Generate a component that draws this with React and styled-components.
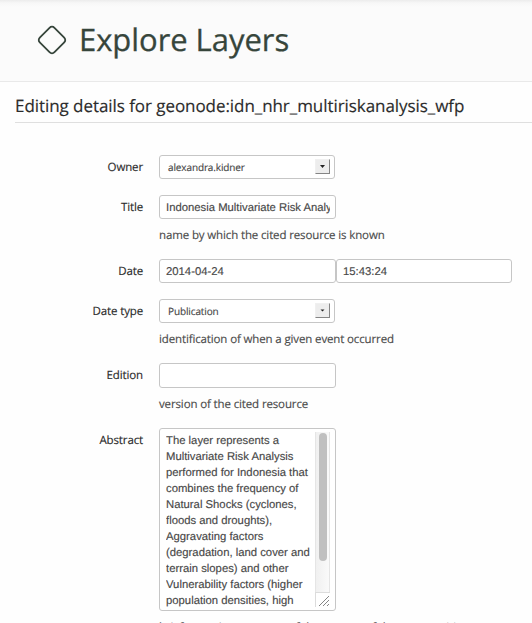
import React from "react";
import styled, { createGlobalStyle } from "styled-components";

const GlobalStyle = createGlobalStyle`
  * { box-sizing: border-box; }
  html, body { margin: 0; background: #fefefe; overflow: hidden; }
`;

const Page = styled.main`
  width: 532px;
  height: 623px;
  overflow: hidden;
  background: #fefefe;
  color: #2b2b2b;
  font-family: "Open Sans", "Noto Sans", sans-serif;
  text-rendering: geometricPrecision;
  -webkit-text-stroke: 0.15px;
`;

const Header = styled.header`
  display: flex;
  align-items: center;
  gap: 11px;
  height: 82px;
  padding: 0 0 2px 36px;
  border-bottom: 1px solid #e9e9e9;
  background: linear-gradient(#ececec 0, #f7f7f7 3px, #fbfbfb 7px, #fbfbfb 100%);
  color: #36453b;
`;

const PageTitle = styled.h1`
  margin: 0;
  font-size: 31px;
  line-height: 40px;
  font-weight: 400;
  letter-spacing: -0.05px;
  white-space: nowrap;
  -webkit-text-stroke: 0.3px;
`;

const SectionTitle = styled.h2`
  height: 41px;
  margin: 0 0 32px 15px;
  padding-top: 11px;
  border-bottom: 1px solid #dfdfdf;
  font-size: 17px;
  line-height: 25px;
  font-weight: 400;
  letter-spacing: -0.06px;
  white-space: nowrap;
`;

const Form = styled.form`
  display: flex;
  flex-direction: column;
`;

const Row = styled.div`
  display: grid;
  grid-template-columns: 143px 1fr;
  column-gap: 16px;
  height: ${(p) => p.$height}px;
  flex: none;
`;

const Label = styled.label`
  height: 26px;
  text-align: right;
  font-size: 11.5px;
  line-height: 26px;
  letter-spacing: -0.13px;
  white-space: nowrap;
`;

const Controls = styled.div`
  display: flex;
`;

const Input = styled.input`
  display: block;
  width: ${(p) => p.$width || 177}px;
  height: ${(p) => p.$height || 24}px;
  margin: 0;
  padding: 2px 5px 0 6px;
  border: 1px solid #c6c6c6;
  border-radius: 3px;
  outline: 0;
  background: #fff;
  color: #484848;
  font: 11.3px/20px "Liberation Sans", Arial, sans-serif;
  text-rendering: geometricPrecision;
`;

const Select = styled.div`
  display: flex;
  align-items: center;
  justify-content: space-between;
  width: 176px;
  height: 24px;
  padding: 0 4px 0 8px;
  border: 1px solid #c6c6c6;
  border-radius: 3px;
  background: #fff;
  color: #454545;
  font-size: 10px;
  letter-spacing: -0.12px;
`;

const SelectButton = styled.span`
  display: flex;
  align-items: center;
  justify-content: center;
  width: 15px;
  height: 15px;
  margin-bottom: 1px;
  border: 1px solid;
  border-color: #f0f0f0 #858585 #858585 #f0f0f0;
  background: #ededed;
`;

const Help = styled.p`
  margin: 7px 0 0;
  color: #4b4b4b;
  font-size: 11.5px;
  line-height: 20px;
  letter-spacing: -0.13px;
  white-space: nowrap;
`;

const TextArea = styled.div`
  display: flex;
  justify-content: space-between;
  width: 177px;
  height: 183px;
  padding: 3px 5px 3px 6px;
  border: 1px solid #c6c6c6;
  border-radius: 3px;
  background: #fff;
  color: #484848;
`;

const TextLines = styled.div`
  height: 178px;
  padding-top: 1px;
  overflow: hidden;
  font: 11.3px/16px "Liberation Sans", Arial, sans-serif;
  white-space: pre;
`;

const ScrollColumn = styled.div`
  display: flex;
  flex-direction: column;
  flex: none;
  width: 15px;
  height: 175px;
`;

const ScrollTrack = styled.div`
  height: 161px;
  padding: 1px 3px;
  border: solid #e5e5e5;
  border-width: 0 1px;
  background: linear-gradient(90deg, #f0f0f0, #fafafa);
`;

const ScrollThumb = styled.div`
  width: 8px;
  height: 128px;
  border-radius: 4px;
  background: #c0c0c0;
`;

const Grip = styled.div`
  height: 15px;
  flex: none;
  border: solid #dcdcdc;
  border-width: 1px 0 0 1px;
  svg { display: block; }
`;

const DiamondIcon = () => (
  <svg width="32" height="32" viewBox="0 0 32 32" fill="none" stroke="currentColor" strokeWidth="1.8">
    <rect x="5.6" y="5.6" width="20.8" height="20.8" rx="3.5" transform="rotate(45 16 16)" />
  </svg>
);

const Dropdown = ({ value, arrow }) => (
  <Select>
    <span>{value}</span>
    <SelectButton>
      <svg width="5" height="3" viewBox="0 0 5 3">
        <path d={arrow === "small" ? "M.5 .5h4L2.5 2.5z" : "M0 0h5L2.5 3z"} fill="#222" />
      </svg>
    </SelectButton>
  </Select>
);

const Field = ({ label, height, help, children }) => (
  <Row $height={height}>
    <Label>{label}</Label>
    <div>
      <Controls>{children}</Controls>
      {help && <Help>{help}</Help>}
    </div>
  </Row>
);

const abstractText = `The layer represents a
Multivariate Risk Analysis
performed for Indonesia that
combines the frequency of
Natural Shocks (cyclones,
floods and droughts),
Aggravating factors
(degradation, land cover and
terrain slopes) and other
Vulnerability factors (higher
population densities, high`;

export default function App() {
  return (
    <Page>
      <GlobalStyle />
      <Header>
        <DiamondIcon />
        <PageTitle>Explore Layers</PageTitle>
      </Header>
      <SectionTitle>Editing details for geonode:idn_nhr_multiriskanalysis_wfp</SectionTitle>
      <Form>
        <Field label="Owner" height={40}>
          <Dropdown value="alexandra.kidner" />
        </Field>
        <Field label="Title" height={64} help="name by which the cited resource is known">
          <Input defaultValue="Indonesia Multivariate Risk Analy" />
        </Field>
        <Field label="Date" height={40}>
          <Input defaultValue="2014-04-24" />
          <Input $width={176} defaultValue="15:43:24" />
        </Field>
        <Field label="Date type" height={64} help="identification of when a given event occurred">
          <Dropdown value="Publication" arrow="small" />
        </Field>
        <Field label="Edition" height={65} help="version of the cited resource">
          <Input $height={25} />
        </Field>
        <Field label="Abstract" height={220} help="brief narrative summary of the content of the resource(s)">
          <TextArea>
            <TextLines>{abstractText}</TextLines>
            <ScrollColumn>
              <ScrollTrack><ScrollThumb /></ScrollTrack>
              <Grip>
                <svg width="13" height="13" viewBox="0 0 13 13" stroke="#858585" strokeWidth="1">
                  <path d="M3 13 13 3M7 13l6-6M11 13l2-2" />
                </svg>
              </Grip>
            </ScrollColumn>
          </TextArea>
        </Field>
      </Form>
    </Page>
  );
}
